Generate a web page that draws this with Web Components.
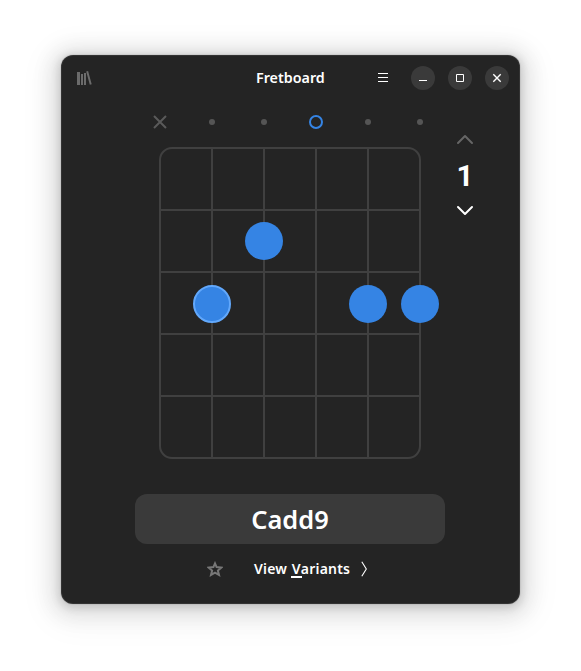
<!DOCTYPE html>
<html lang="en">
<head>
<meta charset="utf-8">
<title>Fretboard</title>
<style>
body { margin: 0; background: #fff; height: 671px; overflow: hidden; font-family: "Noto Sans", "Open Sans", sans-serif; color: #fff; }
</style>
</head>
<body>
<fret-window>
  <title-bar slot="header">Fretboard</title-bar>
  <chord-diagram></chord-diagram>
  <neck-position>1</neck-position>
  <chord-entry slot="footer">Cadd9</chord-entry>
  <chord-actions slot="footer"></chord-actions>
</fret-window>
<script>
const define = (name, html) => customElements.define(name, class extends HTMLElement {
  constructor() {
    super();
    this.attachShadow({ mode: 'open' }).innerHTML = html;
  }
});

define('fret-window', `
<style>
:host { display: flex; flex-direction: column; box-sizing: border-box; width: 459px; height: 549px; margin: 55px 61px 0;
  border-radius: 12px; background: #242424;
  box-shadow: inset 0 0 0 1px rgba(255,255,255,.07), 0 2px 8px 2px rgba(0,0,0,.13), 0 3px 20px 10px rgba(0,0,0,.09), 0 6px 32px 16px rgba(0,0,0,.04), 0 0 0 1px rgba(0,0,0,.05); }
main { display: flex; padding-left: 73px; height: 393px; }
footer { display: flex; flex-direction: column; padding-left: 74px; }
</style>
<slot name="header"></slot>
<main><slot></slot></main>
<footer><slot name="footer"></slot></footer>`);

define('title-bar', `
<style>
:host { display: grid; grid-template-columns: 1fr auto 1fr; align-items: center; height: 46px; padding: 0 11px 0 11px; }
.library { display: block; margin-left: 4px; }
h1 { margin: 0; font-size: 14.3px; line-height: 20px; font-weight: 600; width: 69px; white-space: nowrap; letter-spacing: 0; }
.end { display: flex; justify-content: flex-end; align-items: center; gap: 13px; }
.menu { margin-right: 7px; }
</style>
<svg class="library" width="16" height="16" viewBox="0 0 16 16" fill="#6b6b6b">
  <path d="M1 2h3v13H1zM5 4h2v11H5zM8 3h2v12H8zM10.2 1.6l1.9-.5 3.6 13.2-1.9.5z"/>
</svg>
<h1><slot></slot></h1>
<div class="end">
  <svg class="menu" width="16" height="16" viewBox="0 0 16 16" fill="#fff"><path d="M3 3h10v1H3zM3 7h10v1H3zM3 11h10v1H3z"/></svg>
  <window-button><svg width="16" height="16" viewBox="0 0 16 16"><path d="M4 10h8v1H4z" fill="#fff"/></svg></window-button>
  <window-button><svg width="16" height="16" viewBox="0 0 16 16"><path d="M4.5 4.5h7v7h-7z" fill="none" stroke="#fff"/></svg></window-button>
  <window-button><svg width="16" height="16" viewBox="0 0 16 16"><path d="M4.3 4.3l7.4 7.4M11.7 4.3l-7.4 7.4" stroke="#fff" stroke-width="1.4"/></svg></window-button>
</div>`);

define('window-button', `
<style>
:host { display: grid; place-items: center; width: 24px; height: 24px; border-radius: 50%; background: #3a3a3a; }
</style>
<slot></slot>`);

define('chord-diagram', `
<style>
:host { display: flex; flex-direction: column; width: 312px; }
.toggles { display: grid; grid-template-columns: repeat(6, 52px); place-items: center; height: 20px; margin-top: 11px; }
.board { display: block; margin-top: 13px; }
</style>
<div class="toggles">
  <string-toggle state="muted"></string-toggle>
  <string-toggle state="fretted"></string-toggle>
  <string-toggle state="fretted"></string-toggle>
  <string-toggle state="open"></string-toggle>
  <string-toggle state="fretted"></string-toggle>
  <string-toggle state="fretted"></string-toggle>
</div>
<svg class="board" width="312" height="316" viewBox="0 0 312 316" fill="none">
  <rect x="26" y="3" width="260" height="310" rx="12" stroke="#404040" stroke-width="2"/>
  <path d="M78 4v308M130 4v308M182 4v308M234 4v308M27 65h258M27 127h258M27 189h258M27 251h258" stroke="#404040" stroke-width="2"/>
  <g fill="#3584e4">
    <circle cx="130" cy="96" r="19"/>
    <circle cx="78" cy="159" r="18" stroke="#62a8fb" stroke-width="2"/>
    <circle cx="234" cy="159" r="19"/>
    <circle cx="286" cy="159" r="19"/>
  </g>
</svg>`);

customElements.define('string-toggle', class extends HTMLElement {
  constructor() {
    super();
    const shapes = {
      muted: '<path d="M2 2l12 12M14 2L2 14" stroke="#5a5a5a" stroke-width="2"/>',
      fretted: '<circle cx="8" cy="8" r="3" fill="#555"/>',
      open: '<circle cx="8" cy="8" r="6" fill="none" stroke="#3584e4" stroke-width="2"/>'
    };
    this.attachShadow({ mode: 'open' }).innerHTML =
      '<style>:host { display: block; height: 16px; } svg { display: block; }</style>' +
      '<svg width="16" height="16" viewBox="0 0 16 16">' + shapes[this.getAttribute('state')] + '</svg>';
  }
});

define('neck-position', `
<style>
:host { display: flex; flex-direction: column; align-items: center; width: 38px; padding-top: 31px; }
svg { display: block; fill: none; stroke-width: 2; stroke: #fff; stroke-linecap: round; stroke-linejoin: round; }
.up { stroke: #666; }
span { font-family: Roboto, sans-serif; font-size: 29.5px; line-height: 40px; font-weight: 700; margin: 8px 0 6px; }
</style>
<svg class="up" width="18" height="16" viewBox="0 0 18 16"><path d="M2 11l7-7 7 7"/></svg>
<span><slot></slot></span>
<svg width="18" height="16" viewBox="0 0 18 16"><path d="M2 5l7 7 7-7"/></svg>`);

define('chord-entry', `
<style>
:host { display: flex; justify-content: center; align-items: center; width: 310px; height: 50px; border-radius: 12px; background: #3a3a3a;
  font-size: 25.4px; line-height: 34px; font-weight: 600; }
</style>
<slot></slot>`);

define('chord-actions', `
<style>
:host { display: flex; align-items: center; width: 310px; height: 50px; }
svg { display: block; }
.star { margin-left: 72px; }
.label { margin-left: 31px; width: 96px; white-space: nowrap; font-size: 14px; line-height: 20px; font-weight: 600; letter-spacing: .2px; word-spacing: .8px; }
u { text-decoration: none; padding: 0 1px; margin: 0 -1px; background: linear-gradient(#fff, #fff) 0 100% / 100% 2px no-repeat; display: inline-block; line-height: 18px; }
.next { margin-left: 6px; }
</style>
<svg class="star" width="16" height="16" viewBox="0 0 16 16" fill="none" stroke="#777" stroke-width="2"><path d="M8 2.4L9.6 6.1l4.8.4-3.5 3 1.1 4.4L8 11.6l-4 2.3 1.1-4.4-3.5-3 4.8-.4z"/></svg>
<span class="label">View <u>V</u>ariants</span>
<svg class="next" width="16" height="16" viewBox="0 0 16 16" fill="none" stroke="#fff" stroke-width="1.1"><path d="M5.8 .8l4.5 7.2-4.5 7.2"/></svg>`);
</script>
</body>
</html>
